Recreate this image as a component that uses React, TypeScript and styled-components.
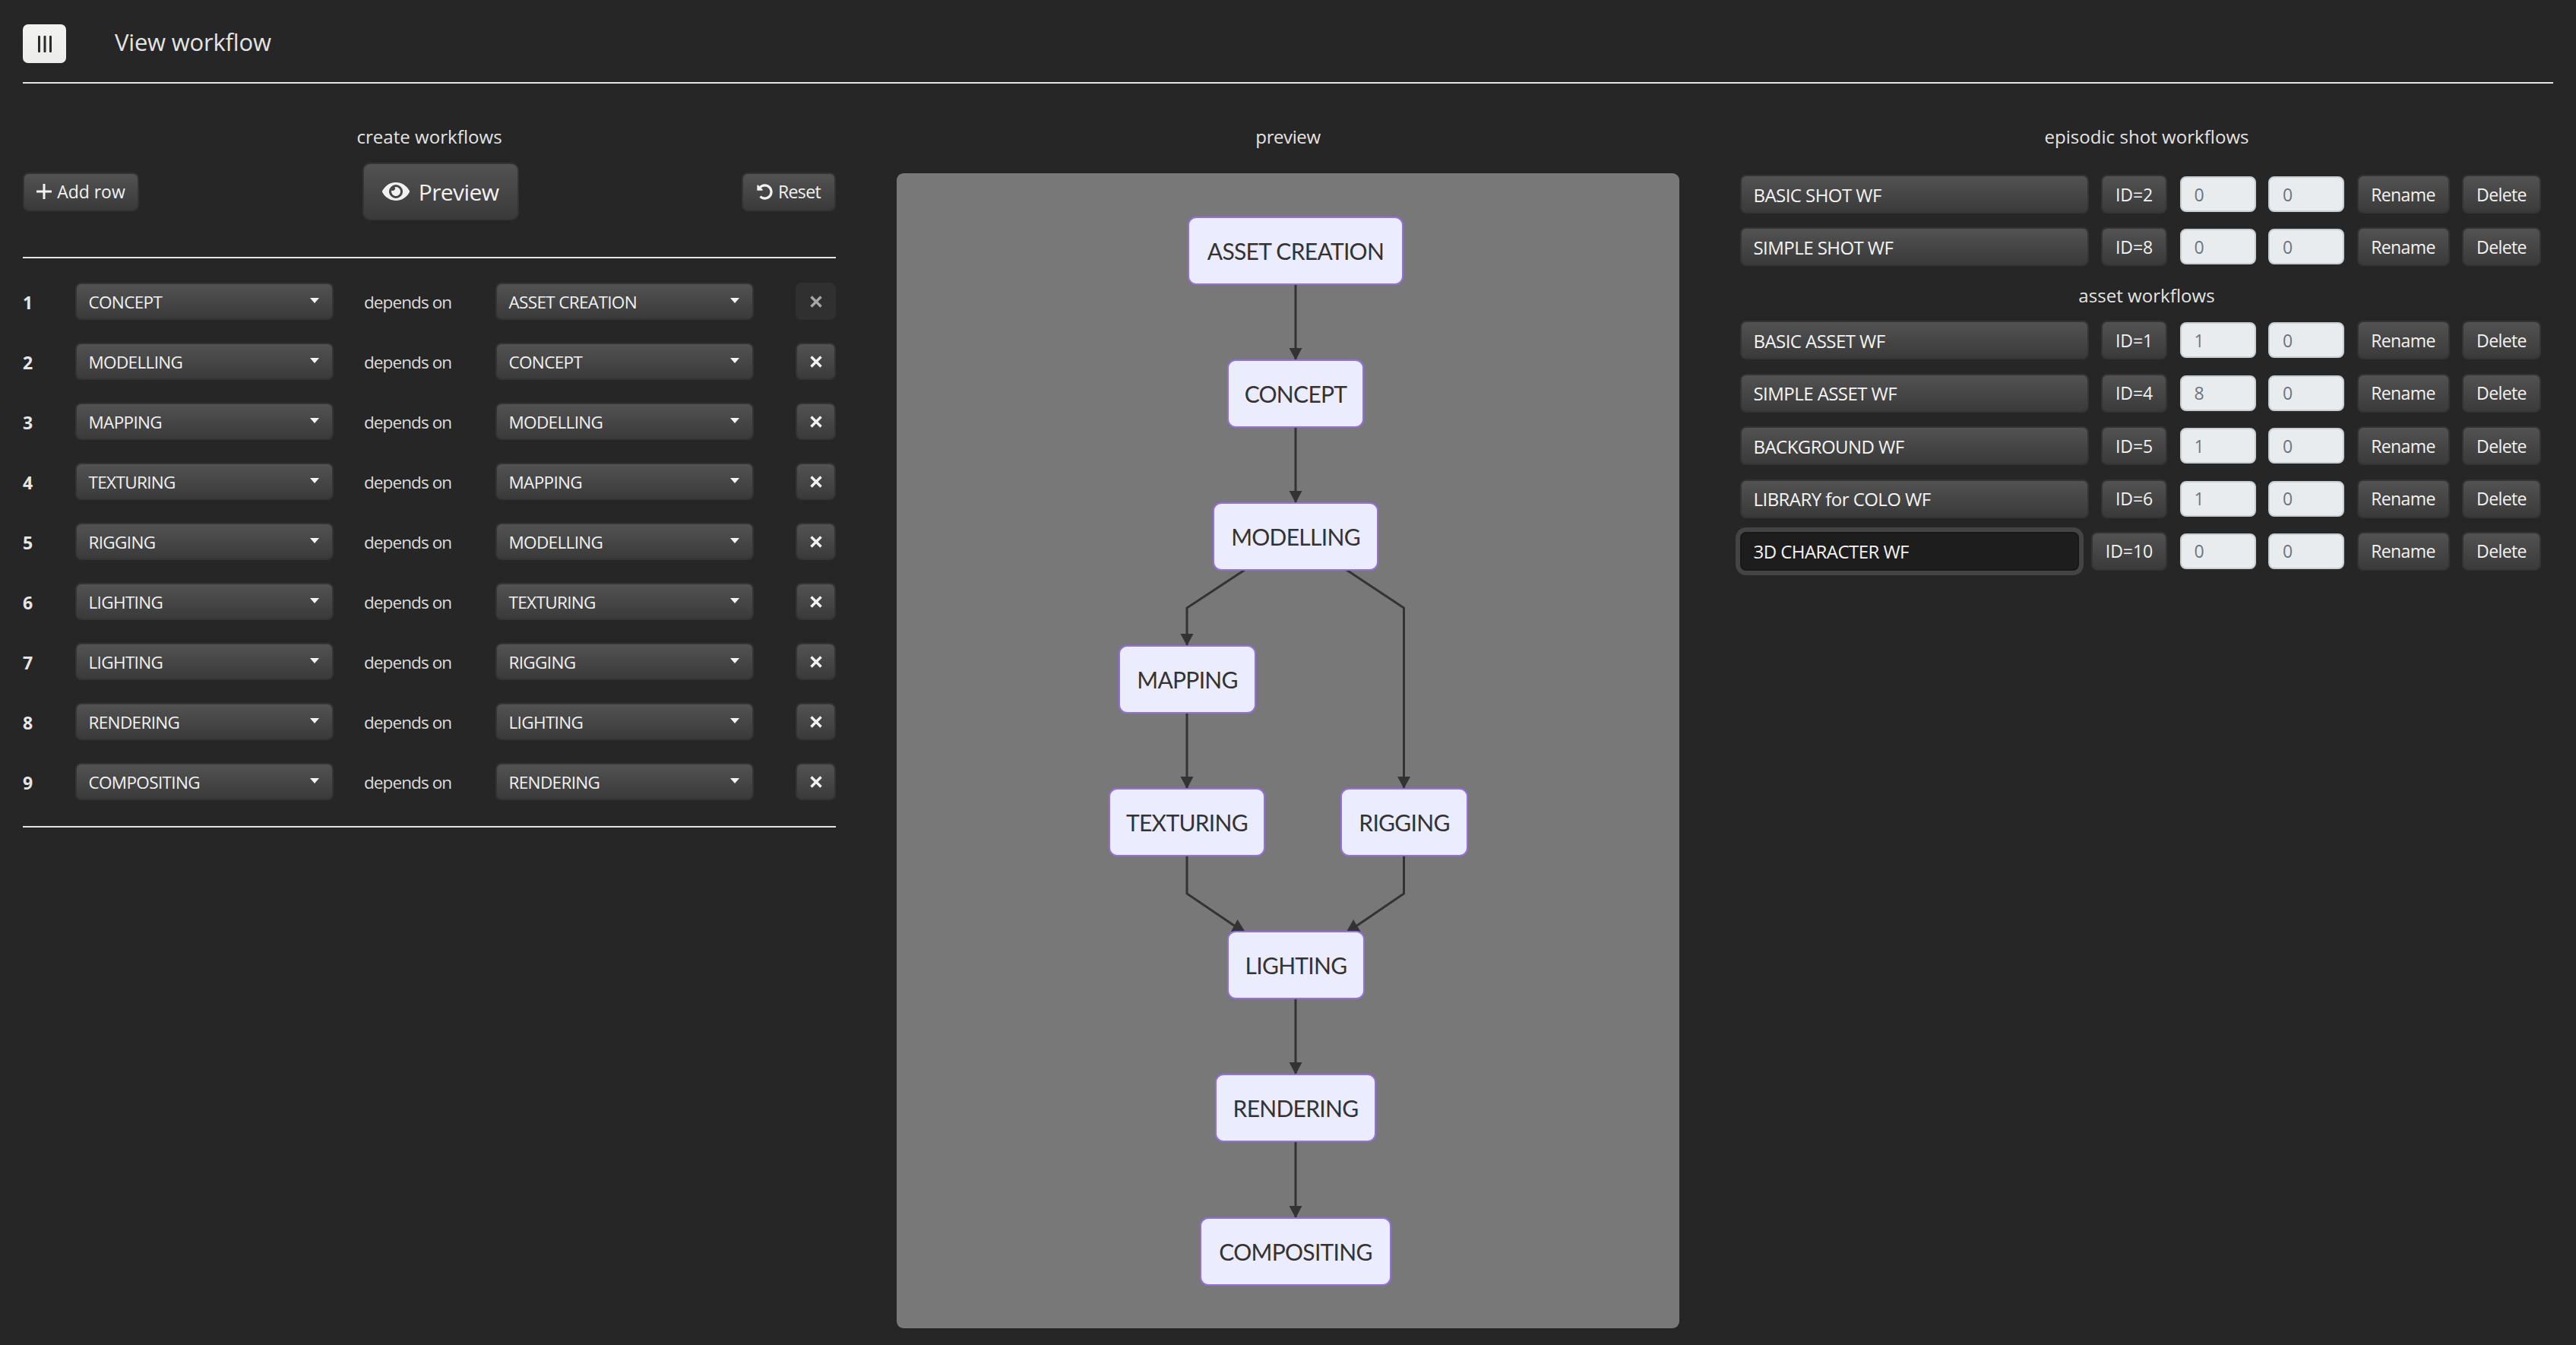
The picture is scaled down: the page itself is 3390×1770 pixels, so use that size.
import React from "react";
import styled, { createGlobalStyle } from "styled-components";
import { FaEye, FaUndoAlt } from "react-icons/fa";

const Global = createGlobalStyle`
  html, body { margin: 0; padding: 0; background: #262626; }
  body { font-family: "Open Sans", "Noto Sans", sans-serif; color: #e6e6e6; }
  * { box-sizing: border-box; }
`;

const Page = styled.div`
  width: 3390px;
  height: 1770px;
  overflow: hidden;
  background: #262626;
`;

const Header = styled.header`
  display: flex;
  align-items: center;
  gap: 64px;
  height: 110px;
  margin: 0 30px;
  padding-top: 7px;
  border-bottom: 2px solid #e4e4e4;
`;

const MenuButton = styled.button`
  display: flex;
  align-items: center;
  justify-content: center;
  width: 57px;
  height: 51px;
  padding: 0;
  border: 0;
  border-radius: 7px;
  background: linear-gradient(#f2f3f1, #ecedeb);
`;

const Title = styled.h1`
  margin: -6px 0 0;
  font-size: 31px;
  line-height: 40px;
  font-weight: 400;
  letter-spacing: -0.2px;
  color: #e4e4e4;
`;

const Columns = styled.main`
  display: grid;
  grid-template-columns: repeat(3, 1130px);
`;

const Column = styled.section<{ $pad: number }>`
  display: flex;
  flex-direction: column;
  padding: 53px ${(p) => p.$pad}px 0;
`;

const Heading = styled.h2`
  margin: -1px 0 1px;
  height: 36px;
  font-size: 24px;
  line-height: 36px;
  font-weight: 400;
  text-align: center;
  letter-spacing: 0.05px;
  color: #e4e4e4;
`;

const PreviewHeading = styled(Heading)`
  letter-spacing: -0.4px;
`;

const Toolbar = styled.div`
  display: flex;
  align-items: center;
  justify-content: space-between;
  height: 76px;
  margin: 15px 0 48px;
`;

const Button = styled.button<{ $w?: number; $big?: boolean; $off?: boolean }>`
  display: inline-flex;
  align-items: center;
  justify-content: center;
  flex: none;
  gap: ${(p) => (p.$big ? 12 : 7)}px;
  width: ${(p) => (p.$w ? `${p.$w}px` : "auto")};
  height: ${(p) => (p.$big ? 76 : 51)}px;
  padding: 0;
  border: 2px solid ${(p) => (p.$off ? "#303030" : "#343434")};
  border-radius: ${(p) => (p.$big ? 10 : 8)}px;
  background: ${(p) => (p.$off ? "#303030" : "linear-gradient(#525252, #3a3a3a)")};
  color: ${(p) => (p.$off ? "#a6a6a6" : "#f2f2f2")};
  font-family: inherit;
  font-size: ${(p) => (p.$big ? 30 : 23)}px;
  letter-spacing: -0.6px;
`;

const LooseButton = styled(Button)`
  letter-spacing: -0.05px;
`;

const RemoveButton = styled(Button)`
  height: 49px;
`;

const Rule = styled.hr`
  width: 100%;
  height: 2px;
  margin: 0;
  border: 0;
  background: #e4e4e4;
`;

const Rows = styled.div`
  display: flex;
  flex-direction: column;
  gap: 30px;
  margin: 32px 0 34px;
`;

const DepRow = styled.div`
  display: flex;
  align-items: center;
  height: 49px;
`;

const RowNumber = styled.span`
  width: 69px;
  padding-top: 2px;
  font-size: 23px;
  font-weight: 700;
  color: #e6e6e6;
`;

const Select = styled.div`
  position: relative;
  display: flex;
  align-items: center;
  flex: none;
  width: 340px;
  height: 49px;
  padding: 1px 0 0 15.5px;
  border: 2px solid #343434;
  border-radius: 8px;
  background: linear-gradient(#525252, #3a3a3a);
  color: #f2f2f2;
  font-size: 22.5px;
  letter-spacing: -0.65px;
  &::after {
    content: "";
    position: absolute;
    right: 17px;
    top: 18px;
    border-left: 6px solid transparent;
    border-right: 6px solid transparent;
    border-top: 7px solid #f4f4f4;
  }
`;

const DependsOn = styled.span`
  width: 213px;
  padding: 2px 0 0 40px;
  font-size: 22.5px;
  letter-spacing: -0.9px;
  color: #dcdcdc;
`;

const RemoveSlot = styled.div`
  margin-left: auto;
`;

const Panel = styled.div`
  height: 1520px;
  margin-top: 29px;
  border-radius: 9px;
  background: #787878;
  overflow: hidden;
`;

const DiagramSvg = styled.svg`
  display: block;
  width: 1030px;
  height: 1520px;
`;

const NodeLabel = styled.text`
  font-family: "Lato", "Open Sans", sans-serif;
  font-size: 30px;
  letter-spacing: -0.7px;
  fill: #333333;
`;

const WorkflowList = styled.div<{ $top: number; $bottom: number }>`
  display: flex;
  flex-direction: column;
  gap: 18.4px;
  margin: ${(p) => p.$top}px 16px ${(p) => p.$bottom}px 0;
`;

const WorkflowRow = styled.div`
  display: flex;
  align-items: center;
  gap: 16.5px;
  height: 51px;
`;

const NameField = styled.div<{ $focus?: boolean }>`
  display: flex;
  align-items: center;
  flex: 1;
  height: 51px;
  padding: 1px 0 0 15.5px;
  border: 2px solid ${(p) => (p.$focus ? "#181818" : "#343434")};
  border-radius: 8px;
  background: ${(p) => (p.$focus ? "#1d1d1d" : "linear-gradient(#525252, #3a3a3a)")};
  box-shadow: ${(p) => (p.$focus ? "0 0 0 6px #444444" : "none")};
  color: #f4f4f4;
  font-size: 24px;
  letter-spacing: -0.55px;
`;

const NumberField = styled.div`
  display: flex;
  align-items: center;
  flex: none;
  width: 100px;
  height: 47px;
  padding: 0 0 0 17px;
  border: 2px solid #c9ced3;
  border-radius: 8px;
  background: #e9ecef;
  color: #6c757d;
  font-size: 23px;
`;

const edges = [
  "M525 146V246",
  "M525 334V434",
  "M458 522L382 572V622",
  "M592 522L667.5 572V810",
  "M382 710V810",
  "M382 898V948L450 994",
  "M667.5 898V948L600 994",
  "M525 1086V1186",
  "M525 1274V1375",
];

const heads = [
  "M516.5 230H533.5L525 246Z",
  "M516.5 418H533.5L525 434Z",
  "M373.5 606H390.5L382 622Z",
  "M659 794H676L667.5 810Z",
  "M373.5 794H390.5L382 810Z",
  "M448.5 982L458.5 998H440Z",
  "M601 982L610.5 998H592Z",
  "M516.5 1170H533.5L525 1186Z",
  "M516.5 1359H533.5L525 1375Z",
];

const nodes = [
  { label: "ASSET CREATION", x: 384, y: 58, w: 282 },
  { label: "CONCEPT", x: 436, y: 246, w: 178 },
  { label: "MODELLING", x: 417, y: 434, w: 216 },
  { label: "MAPPING", x: 293, y: 622, w: 179 },
  { label: "TEXTURING", x: 280, y: 810, w: 204 },
  { label: "RIGGING", x: 585, y: 810, w: 166 },
  { label: "LIGHTING", x: 436, y: 998, w: 179 },
  { label: "RENDERING", x: 420, y: 1186, w: 210 },
  { label: "COMPOSITING", x: 400, y: 1375, w: 250 },
];

const Diagram = () => (
  <DiagramSvg viewBox="0 0 1030 1520">
    {edges.map((d) => (
      <path key={d} d={d} fill="none" stroke="#333" strokeWidth="3" />
    ))}
    {heads.map((d) => (
      <path key={d} d={d} fill="#333" />
    ))}
    {nodes.map((n) => (
      <g key={n.label}>
        <rect x={n.x} y={n.y} width={n.w} height={88} rx="10" fill="#ECECFF" stroke="#9370DB" strokeWidth="2" />
        <NodeLabel x={n.x + n.w / 2} y={n.y + 56} textAnchor="middle">
          {n.label}
        </NodeLabel>
      </g>
    ))}
  </DiagramSvg>
);

const deps = [
  ["CONCEPT", "ASSET CREATION"],
  ["MODELLING", "CONCEPT"],
  ["MAPPING", "MODELLING"],
  ["TEXTURING", "MAPPING"],
  ["RIGGING", "MODELLING"],
  ["LIGHTING", "TEXTURING"],
  ["LIGHTING", "RIGGING"],
  ["RENDERING", "LIGHTING"],
  ["COMPOSITING", "RENDERING"],
];

const shots = [
  ["BASIC SHOT WF", 2, 0, 0],
  ["SIMPLE SHOT WF", 8, 0, 0],
] as const;

const assets = [
  ["BASIC ASSET WF", 1, 1, 0],
  ["SIMPLE ASSET WF", 4, 8, 0],
  ["BACKGROUND WF", 5, 1, 0],
  ["LIBRARY for COLO WF", 6, 1, 0],
  ["3D CHARACTER WF", 10, 0, 0],
] as const;

const Workflow = ({ row }: { row: readonly [string, number, number, number] }) => {
  const focus = row[1] === 10;
  return (
    <WorkflowRow>
      <NameField $focus={focus}>{row[0]}</NameField>
      <LooseButton $w={focus ? 100 : 87}>ID={row[1]}</LooseButton>
      <NumberField>{row[2]}</NumberField>
      <NumberField>{row[3]}</NumberField>
      <Button $w={122}>Rename</Button>
      <Button $w={104}>Delete</Button>
    </WorkflowRow>
  );
};

const Cross = () => (
  <svg width="16" height="16" viewBox="0 0 16 16" fill="none" stroke="currentColor" strokeWidth="3.4">
    <path d="M1.5 1.5L14.5 14.5M14.5 1.5L1.5 14.5" />
  </svg>
);

const Plus = () => (
  <svg width="20" height="20" viewBox="0 0 20 20" fill="none" stroke="currentColor" strokeWidth="3">
    <path d="M10 0V20M0 10H20" />
  </svg>
);

const Bars = () => (
  <svg width="20" height="22" viewBox="0 0 20 22" fill="#2a2a2a">
    <rect x="1" y="0" width="3" height="22" rx="1" />
    <rect x="8.5" y="0" width="3" height="22" rx="1" />
    <rect x="16" y="0" width="3" height="22" rx="1" />
  </svg>
);

export default function App() {
  return (
    <Page>
      <Global />
      <Header>
        <MenuButton aria-label="menu">
          <Bars />
        </MenuButton>
        <Title>View workflow</Title>
      </Header>
      <Columns>
        <Column $pad={30}>
          <Heading>create workflows</Heading>
          <Toolbar>
            <LooseButton $w={153}>
              <Plus />
              Add row
            </LooseButton>
            <Button $big $w={206}>
              <FaEye size={36} />
              Preview
            </Button>
            <Button $w={124}>
              <FaUndoAlt size={21} />
              Reset
            </Button>
          </Toolbar>
          <Rule />
          <Rows>
            {deps.map(([a, b], i) => (
              <DepRow key={i}>
                <RowNumber>{i + 1}</RowNumber>
                <Select>{a}</Select>
                <DependsOn>depends on</DependsOn>
                <Select>{b}</Select>
                <RemoveSlot>
                  <RemoveButton $w={53} $off={i === 0}>
                    <Cross />
                  </RemoveButton>
                </RemoveSlot>
              </DepRow>
            ))}
          </Rows>
          <Rule />
        </Column>
        <Column $pad={50}>
          <PreviewHeading>preview</PreviewHeading>
          <Panel>
            <Diagram />
          </Panel>
        </Column>
        <Column $pad={30}>
          <Heading>episodic shot workflows</Heading>
          <WorkflowList $top={31} $bottom={22}>
            {shots.map((r) => (
              <Workflow key={r[1]} row={r} />
            ))}
          </WorkflowList>
          <Heading>asset workflows</Heading>
          <WorkflowList $top={14} $bottom={0}>
            {assets.map((r) => (
              <Workflow key={r[1]} row={r} />
            ))}
          </WorkflowList>
        </Column>
      </Columns>
    </Page>
  );
}
